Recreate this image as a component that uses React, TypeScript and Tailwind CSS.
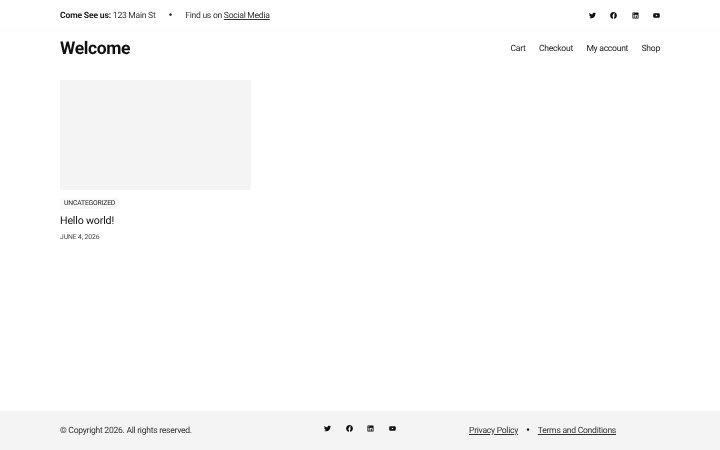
import { FaTwitter, FaFacebook, FaLinkedin, FaYoutube } from 'react-icons/fa';

function SocialIcons() {
  return (
    <div className="flex items-center gap-[14.5px] text-[7px] text-[#111]">
      <FaTwitter />
      <FaFacebook />
      <FaLinkedin />
      <FaYoutube />
    </div>
  );
}

export default function App() {
  return (
    <div className="flex h-[450px] flex-col bg-white font-['Roboto',sans-serif] text-[#333] blur-[0.3px] [text-rendering:geometricPrecision]">
      <div className="flex h-[31px] items-center justify-between border-b border-[#fbfbfb] px-[60px] text-[8.6px] tracking-[-0.28px]">
        <div className="flex translate-y-[1px] items-center">
          <span>
            <strong className="font-bold tracking-[-0.17px] text-[#222]">Come See us:</strong> 123 Main St
          </span>
          <span className="mx-[13px] -translate-y-[1px] text-[12px] leading-[12px] text-[#111]">•</span>
          <span>
            Find us on <a className="underline">Social Media</a>
          </span>
        </div>
        <SocialIcons />
      </div>

      <header className="flex h-[35px] items-center justify-between px-[60px]">
        <h1 className="translate-y-[1px] text-[17.5px] font-bold tracking-[-0.4px] text-[#111]">Welcome</h1>
        <nav className="flex translate-y-[1px] gap-[13.4px] text-[8.6px] tracking-[-0.28px] text-[#222]">
          <a>Cart</a>
          <a>Checkout</a>
          <a>My account</a>
          <a>Shop</a>
        </nav>
      </header>

      <main className="flex-1 px-[60px] pt-[14px]">
        <div className="w-[191px]">
          <div className="h-[110px] rounded-[1px] bg-[#f4f4f4]" />
          <span className="mt-[8px] block w-fit rounded-[2px] bg-[#f8f8f8] px-[4px] py-[1px] text-[6.8px] uppercase leading-[9px] tracking-[-0.17px] text-[#222]">
            Uncategorized
          </span>
          <h2 className="mt-[5px] text-[10.6px] font-normal leading-[14px] tracking-[-0.16px] text-[#111]">Hello world!</h2>
          <p className="mt-[4px] text-[6.8px] uppercase leading-[10px] tracking-[-0.1px] text-[#444]">June 4, 2026</p>
        </div>
      </main>

      <footer className="flex h-[39px] items-center bg-[#f4f4f4] px-[60px] text-[8.6px] tracking-[-0.28px]">
        <div className="w-[264px] translate-y-[1px]">© Copyright 2026. All rights reserved.</div>
        <div className="w-[145px] -translate-y-[2px]">
          <SocialIcons />
        </div>
        <div className="flex translate-y-[1px] items-center">
          <a className="underline">Privacy Policy</a>
          <span className="mx-[8px] -translate-y-[1px] text-[12px] leading-[12px] text-[#111]">•</span>
          <a className="underline">Terms and Conditions</a>
        </div>
      </footer>
    </div>
  );
}
